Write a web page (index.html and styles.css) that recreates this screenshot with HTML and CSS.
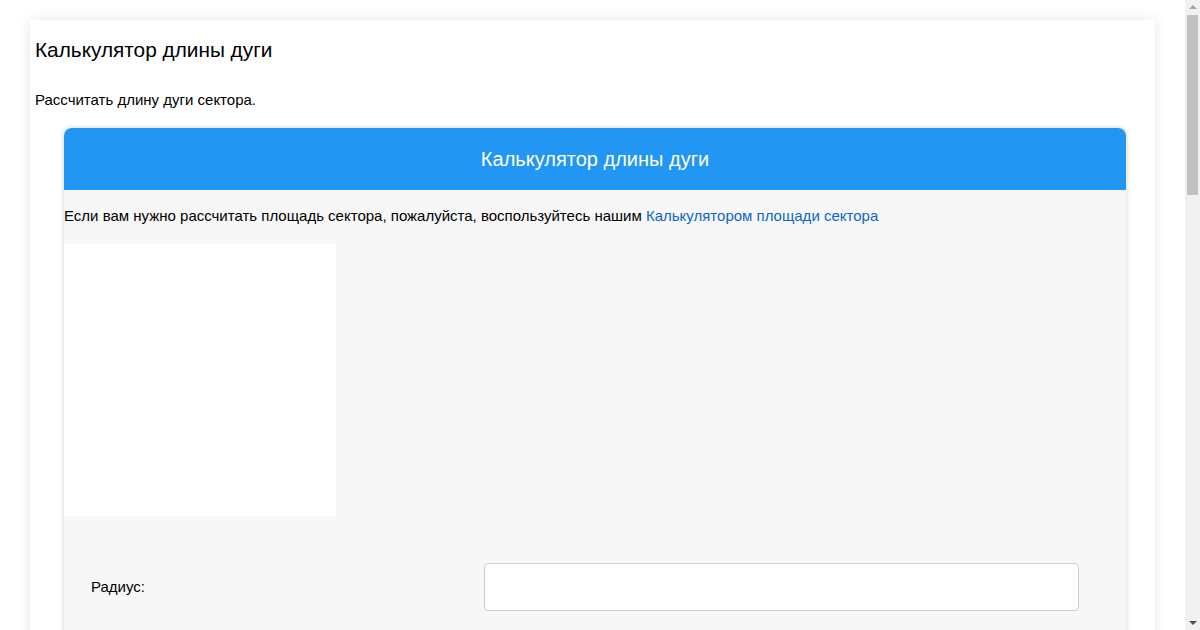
FILE: index.html
```html
<!DOCTYPE html>
<html lang="ru">
<head>
    <meta charset="UTF-8">
    <meta name="viewport" content="width=device-width, initial-scale=1.0">
    <title>Калькулятор длины дуги</title>
    <link rel="stylesheet" href="styles.css">
</head>
<body>
    <div class="page">
        <h1>Калькулятор длины дуги</h1>
        <p class="intro">Рассчитать длину дуги сектора.</p>

        <div class="calc">
            <div class="calc-header">Калькулятор длины дуги</div>
            <div class="calc-body">
                <p class="calc-note">Если вам нужно рассчитать площадь сектора, пожалуйста, воспользуйтесь нашим <a href="#">Калькулятором площади сектора</a></p>

                <div class="figure"></div>

                <div class="form">
                    <div class="form-row">
                        <label for="radius">Радиус:</label>
                        <input type="text" id="radius">
                    </div>
                    <div class="form-row">
                        <label for="angle">Центральный угол (градусы):</label>
                        <input type="text" id="angle">
                    </div>
                    <div class="form-row">
                        <label for="decimals">Знаков после запятой:</label>
                        <input type="text" id="decimals" value="2">
                    </div>
                    <div class="form-actions">
                        <button type="button">Рассчитать</button>
                    </div>
                    <div class="form-row">
                        <label for="result">Длина дуги:</label>
                        <input type="text" id="result" readonly>
                    </div>
                </div>
            </div>
        </div>

        <div class="about">
            <h2>Формула длины дуги</h2>
            <p>Длина дуги L = r × θ, где r — радиус окружности, θ — центральный угол в радианах.</p>
            <p>Если угол задан в градусах, длина дуги L = π × r × n / 180, где n — центральный угол в градусах.</p>
        </div>
    </div>

    <!-- полоса прокрутки окна -->
    <div class="scrollbar" aria-hidden="true">
        <span class="scroll-up"></span>
        <span class="scroll-thumb"></span>
        <span class="scroll-down"></span>
    </div>
</body>
</html>
```

FILE: styles.css
```css
/* базовые настройки */
body {
    margin: 0;
    padding: 0 15px 0 0;
    background-color: #ffffff;
    color: #000000;
    font-family: "Liberation Sans", Arial, Helvetica, sans-serif;
    font-size: 15px;
    line-height: 18px;
}

/* внешний контейнер страницы */
.page {
    max-width: 1115px;
    margin: 20px auto;
    padding: 5px 5px 40px;
    background-color: #ffffff;
    box-shadow: 0 0 12px rgba(0, 0, 0, 0.1);
}

.page h1 {
    font-size: 20.8px;
    font-weight: normal;
    line-height: 24px;
    margin: 13px 0 29px;
}

.intro {
    margin: 0 0 19px;
}

/* карточка калькулятора */
.calc {
    margin: 0 24px 0 29px;
    background-color: #f7f7f7;
    border-radius: 8px;
    box-shadow: 0 0 5px rgba(0, 0, 0, 0.2);
}

.calc-header {
    background-color: #2196f3;
    color: #ffffff;
    font-size: 20px;
    line-height: 24px;
    text-align: center;
    padding: 19px 10px;
    border-radius: 8px 8px 0 0;
}

.calc-body {
    padding: 0 0 60px;
}

.calc-note {
    margin: 17px 0 19px;
}

.calc-note a {
    color: #0b66cc;
    text-decoration: none;
}

/* место под рисунок сектора */
.figure {
    width: 272px;
    height: 272px;
    background-color: #ffffff;
}

/* поля ввода */
.form {
    padding: 47px 47px 0 27px;
}

.form-row {
    display: grid;
    grid-template-columns: 393px 1fr;
    align-items: center;
    margin-bottom: 40px;
}

.form-row input {
    height: 48px;
    box-sizing: border-box;
    border: 1px solid #cccccc;
    border-radius: 4px;
    background-color: #ffffff;
    padding: 0 12px;
    font-family: inherit;
    font-size: 15px;
}

.form-actions {
    padding: 10px 0 50px 393px;
}

.form-actions button {
    background-color: #2196f3;
    color: #ffffff;
    border: none;
    border-radius: 4px;
    padding: 14px 40px;
    font-family: inherit;
    font-size: 16px;
}

/* пояснение под калькулятором */
.about {
    padding: 40px 29px 700px;
}

.about h2 {
    font-size: 18px;
    font-weight: normal;
    margin: 0 0 16px;
}

.about p {
    margin: 0 0 14px;
}

/* полоса прокрутки поверх окна */
.scrollbar {
    position: fixed;
    top: 0;
    right: 0;
    width: 15px;
    height: 100vh;
    background-color: #f1f1f1;
    display: flex;
    flex-direction: column;
    align-items: center;
}

.scroll-up {
    margin-top: 5px;
    border-left: 4px solid transparent;
    border-right: 4px solid transparent;
    border-bottom: 4px solid #a3a3a3;
}

.scroll-thumb {
    width: 11px;
    height: 180px;
    margin-top: 6px;
    background-color: #c1c1c1;
}

.scroll-down {
    margin-top: auto;
    margin-bottom: 5px;
    border-left: 4px solid transparent;
    border-right: 4px solid transparent;
    border-top: 4px solid #505050;
}
```
